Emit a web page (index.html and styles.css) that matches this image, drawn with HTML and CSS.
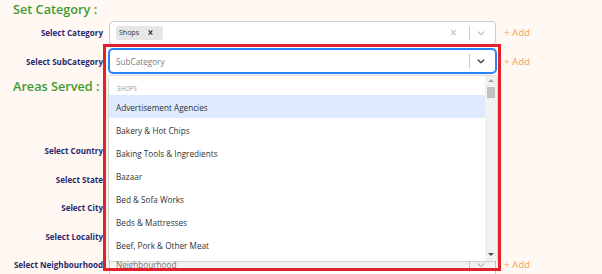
FILE: index.html
```html
<!DOCTYPE html>
<html lang="en">
<head>
  <meta charset="UTF-8" />
  <title>Business Details</title>
  <meta name="viewport" content="width=device-width, initial-scale=1.0">
  <link rel="stylesheet" href="styles.css">
</head>
<body>

  <div class="page">

    <!-- Categoria -->
    <h2 class="section-title">Set Category :</h2>
    <div class="rows rows-top">
      <div class="field-row">
        <label class="field-label">Select Category</label>
        <div class="select">
          <div class="select-value">
            <span class="chip">
              <span class="chip-label">Shops</span>
              <span class="chip-remove">
                <svg viewBox="0 0 20 20" width="9" height="9"><path d="M14.348 14.849c-0.469 0.469-1.229 0.469-1.697 0l-2.651-3.030-2.651 3.029c-0.469 0.469-1.229 0.469-1.697 0-0.469-0.469-0.469-1.229 0-1.697l2.758-3.15-2.759-3.152c-0.469-0.469-0.469-1.228 0-1.697s1.228-0.469 1.697 0l2.652 3.031 2.651-3.031c0.469-0.469 1.228-0.469 1.697 0s0.469 1.229 0 1.697l-2.758 3.152 2.758 3.15c0.469 0.469 0.469 1.229 0 1.698z"/></svg>
              </span>
            </span>
          </div>
          <div class="indicators">
            <span class="clear">
              <svg viewBox="0 0 20 20" width="11" height="11"><path d="M14.348 14.849c-0.469 0.469-1.229 0.469-1.697 0l-2.651-3.030-2.651 3.029c-0.469 0.469-1.229 0.469-1.697 0-0.469-0.469-0.469-1.229 0-1.697l2.758-3.15-2.759-3.152c-0.469-0.469-0.469-1.228 0-1.697s1.228-0.469 1.697 0l2.652 3.031 2.651-3.031c0.469-0.469 1.228-0.469 1.697 0s0.469 1.229 0 1.697l-2.758 3.152 2.758 3.15c0.469 0.469 0.469 1.229 0 1.698z"/></svg>
            </span>
            <span class="sep"></span>
            <span class="chev">
              <svg viewBox="0 0 20 20" width="12" height="12"><path d="M4.516 7.548c0.436-0.446 1.043-0.481 1.576 0l3.908 3.747 3.908-3.747c0.533-0.481 1.141-0.446 1.574 0 0.436 0.445 0.408 1.197 0 1.615-0.406 0.418-4.695 4.502-4.695 4.502-0.217 0.223-0.502 0.335-0.787 0.335s-0.57-0.112-0.789-0.335c0 0-4.287-4.084-4.695-4.502s-0.436-1.17 0-1.615z"/></svg>
            </span>
          </div>
        </div>
        <a class="add-link">+ Add</a>
      </div>

      <div class="field-row">
        <label class="field-label">Select SubCategory</label>
        <div class="select focused">
          <div class="select-value placeholder">SubCategory</div>
          <div class="indicators">
            <span class="sep"></span>
            <span class="chev dark">
              <svg viewBox="0 0 20 20" width="12" height="12"><path d="M4.516 7.548c0.436-0.446 1.043-0.481 1.576 0l3.908 3.747 3.908-3.747c0.533-0.481 1.141-0.446 1.574 0 0.436 0.445 0.408 1.197 0 1.615-0.406 0.418-4.695 4.502-4.695 4.502-0.217 0.223-0.502 0.335-0.787 0.335s-0.57-0.112-0.789-0.335c0 0-4.287-4.084-4.695-4.502s-0.436-1.17 0-1.615z"/></svg>
            </span>
          </div>

          <!-- Menu desplegado -->
          <div class="menu">
            <div class="menu-list">
              <div class="group-heading">Shops</div>
              <div class="option active">Advertisement Agencies</div>
              <div class="option">Bakery &amp; Hot Chips</div>
              <div class="option">Baking Tools &amp; Ingredients</div>
              <div class="option">Bazaar</div>
              <div class="option">Bed &amp; Sofa Works</div>
              <div class="option">Beds &amp; Mattresses</div>
              <div class="option">Beef, Pork &amp; Other Meat</div>
              <div class="option">Bicycle Shops</div>
            </div>
            <div class="scrollbar">
              <span class="arrow-up"></span>
              <span class="thumb"></span>
              <span class="track-fill"></span>
              <span class="arrow-down"></span>
            </div>
          </div>
        </div>
        <a class="add-link">+ Add</a>
      </div>
    </div>

    <!-- Zonas -->
    <h2 class="section-title areas">Areas Served :</h2>
    <div class="rows rows-areas">
      <div class="field-row">
        <label class="field-label">Select Country</label>
        <div class="select"><div class="select-value placeholder">Country</div></div>
      </div>
      <div class="field-row">
        <label class="field-label">Select State</label>
        <div class="select"><div class="select-value placeholder">State</div></div>
      </div>
      <div class="field-row">
        <label class="field-label">Select City</label>
        <div class="select"><div class="select-value placeholder">City</div></div>
      </div>
      <div class="field-row">
        <label class="field-label">Select Locality</label>
        <div class="select"><div class="select-value placeholder">Locality</div></div>
      </div>
      <div class="field-row">
        <label class="field-label">Select Neighbourhood</label>
        <div class="select">
          <div class="select-value placeholder">Neighbourhood</div>
          <div class="indicators">
            <span class="sep"></span>
            <span class="chev">
              <svg viewBox="0 0 20 20" width="12" height="12"><path d="M4.516 7.548c0.436-0.446 1.043-0.481 1.576 0l3.908 3.747 3.908-3.747c0.533-0.481 1.141-0.446 1.574 0 0.436 0.445 0.408 1.197 0 1.615-0.406 0.418-4.695 4.502-4.695 4.502-0.217 0.223-0.502 0.335-0.787 0.335s-0.57-0.112-0.789-0.335c0 0-4.287-4.084-4.695-4.502s-0.436-1.17 0-1.615z"/></svg>
            </span>
          </div>
        </div>
        <a class="add-link">+ Add</a>
      </div>
    </div>

    <!-- Marco de resaltado -->
    <div class="highlight"></div>
  </div>

</body>
</html>
```

FILE: styles.css
```css
* {
  box-sizing: border-box;
}

html, body {
  margin: 0;
  padding: 0;
  height: 100%;
  overflow: hidden;
  background: #fff8f3;
  font-family: "Open Sans", "Noto Sans", sans-serif;
}

.page {
  position: relative;
}

.section-title {
  margin: 0 0 0 13px;
  font-size: 12.7px;
  font-weight: 600;
  line-height: 18px;
  color: #3f9a31;
}

.section-title.areas {
  margin-top: 4px;
}

.rows {
  display: flex;
  flex-direction: column;
  gap: 4.5px;
}

.rows-top {
  margin-top: 2.5px;
}

.rows-areas {
  margin-top: 43.5px;
}

.field-row {
  display: flex;
  align-items: center;
  height: 24px;
}

.field-label {
  width: 103px;
  text-align: right;
  white-space: nowrap;
  font-size: 8.05px;
  font-weight: 700;
  color: #29296f;
}

.select {
  position: relative;
  display: flex;
  align-items: center;
  width: 387px;
  height: 24px;
  margin-left: 6px;
  background: #fff;
  border: 1px solid #ccc;
  border-radius: 4px;
}

.select.focused {
  border-color: #2684ff;
  box-shadow: 0 0 0 1px #2684ff;
}

.select-value {
  flex: 1;
  display: flex;
  align-items: center;
  padding-left: 6px;
  font-size: 8.2px;
  color: #333;
}

.select-value.placeholder {
  color: #808080;
}

.chip {
  display: flex;
  align-items: center;
  height: 14px;
  background: #e6e6e6;
  border-radius: 2px;
}

.chip-label {
  padding: 0 3px 0 3px;
  font-size: 7px;
  color: #333;
}

.chip-remove {
  display: flex;
  align-items: center;
  padding: 0 8px 0 4px;
  fill: #222;
}

.indicators {
  display: flex;
  align-items: center;
  height: 100%;
  padding-right: 3.5px;
}

.clear {
  display: flex;
  justify-content: center;
  width: 23px;
  margin-right: 3.5px;
  fill: #c8c8c8;
}

.sep {
  width: 1px;
  height: 14px;
  background: #ccc;
}

.chev {
  display: flex;
  justify-content: center;
  width: 22px;
  fill: #c8c8c8;
}

.chev.dark {
  fill: #444;
}

.add-link {
  margin-left: 8px;
  font-size: 9.7px;
  color: #f2a366;
  cursor: pointer;
}

/* menu */

.menu {
  position: absolute;
  top: calc(100% + 4px);
  left: -1px;
  width: 388px;
  height: 185px;
  display: flex;
  overflow: hidden;
  background: #fff;
  border-radius: 2px;
  box-shadow: 0 0 0 1px rgba(0,0,0,0.1), 0 4px 11px rgba(0,0,0,0.1);
  z-index: 5;
}

.menu-list {
  flex: 1;
  padding-top: 5px;
}

.group-heading {
  height: 14px;
  line-height: 14px;
  padding: 1px 0 0 8px;
  font-size: 6.2px;
  text-transform: uppercase;
  color: #999;
}

.option {
  height: 23px;
  line-height: 20px;
  padding: 3px 0 0 7px;
  font-size: 8.2px;
  color: #333;
  white-space: nowrap;
}

.option.active {
  background: #deebff;
}

.scrollbar {
  width: 12px;
  display: flex;
  flex-direction: column;
  align-items: center;
  background: #f1f1f1;
}

.arrow-up {
  margin-top: 3px;
  border-left: 3px solid transparent;
  border-right: 3px solid transparent;
  border-bottom: 3px solid #a3a3a3;
}

.thumb {
  width: 8px;
  height: 11px;
  margin-top: 5px;
  background: #c1c1c1;
}

.track-fill {
  flex: 1;
}

.arrow-down {
  margin-bottom: 5px;
  border-left: 3px solid transparent;
  border-right: 3px solid transparent;
  border-top: 3px solid #505050;
}

.highlight {
  position: absolute;
  left: 103px;
  top: 44px;
  width: 398px;
  height: 227px;
  border: 3px solid #e2212b;
  pointer-events: none;
  z-index: 10;
}
```
